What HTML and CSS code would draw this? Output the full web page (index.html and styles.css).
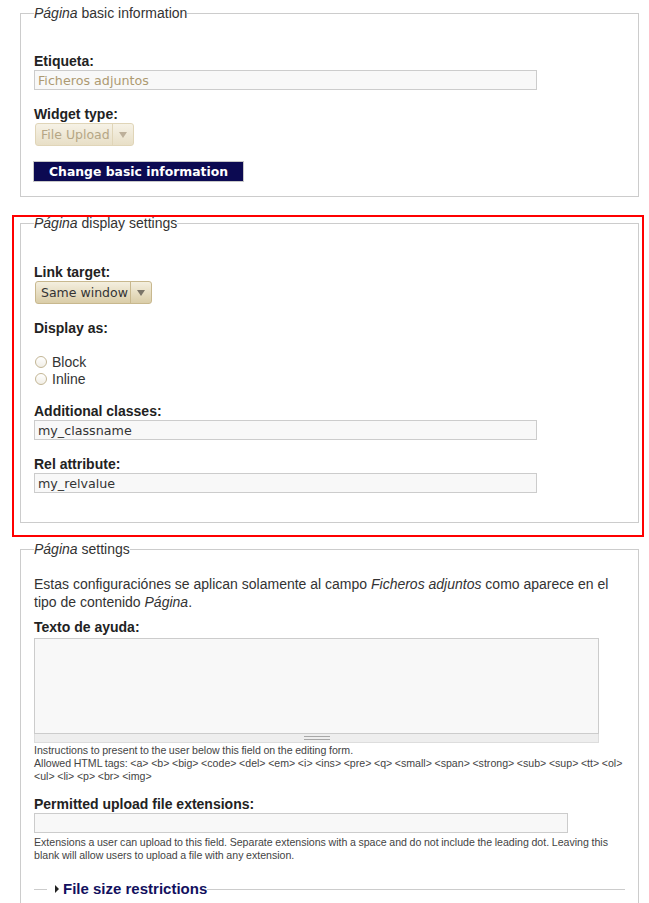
FILE: index.html
```html
<!DOCTYPE html>
<html lang="es">
<head>
<meta charset="utf-8">
<title>Ficheros adjuntos</title>
<link rel="stylesheet" href="styles.css">
</head>
<body>
<div class="page">
  <fieldset class="fs fs-basic">
    <legend><em>Página</em> basic information</legend>
    <div class="item first">
      <label class="lbl">Etiqueta:</label>
      <input class="text w503 is-disabled" type="text" value="Ficheros adjuntos" disabled>
    </div>
    <div class="item">
      <label class="lbl">Widget type:</label>
      <div class="select sel-file is-disabled"><span class="val">File Upload</span><span class="arrow"><span class="tri-down"></span></span></div>
    </div>
    <div class="item btn-row">
      <button class="btn" type="button">Change basic information</button>
    </div>
  </fieldset>

  <div class="highlight">
    <fieldset class="fs fs-display">
      <legend><em>Página</em> display settings</legend>
      <div class="item first">
        <label class="lbl">Link target:</label>
        <div class="select sel-link"><span class="val">Same window</span><span class="arrow"><span class="tri-down"></span></span></div>
      </div>
      <div class="item">
        <label class="lbl">Display as:</label>
        <div class="radios">
          <div class="radio"><span class="circle"></span>Block</div>
          <div class="radio"><span class="circle"></span>Inline</div>
        </div>
      </div>
      <div class="item">
        <label class="lbl">Additional classes:</label>
        <input class="text w503" type="text" value="my_classname">
      </div>
      <div class="item">
        <label class="lbl">Rel attribute:</label>
        <input class="text w503" type="text" value="my_relvalue">
      </div>
    </fieldset>
  </div>

  <fieldset class="fs fs-settings">
    <legend><em>Página</em> settings</legend>
    <p class="intro">Estas configuraciónes se aplican solamente al campo <em>Ficheros adjuntos</em> como aparece en el tipo de contenido <em>Página</em>.</p>
    <div class="item help">
      <label class="lbl">Texto de ayuda:</label>
      <div class="textarea-wrap">
        <div class="textarea"></div>
        <div class="grippie"></div>
      </div>
      <div class="desc">Instructions to present to the user below this field on the editing form.<br>Allowed HTML tags: &lt;a&gt; &lt;b&gt; &lt;big&gt; &lt;code&gt; &lt;del&gt; &lt;em&gt; &lt;i&gt; &lt;ins&gt; &lt;pre&gt; &lt;q&gt; &lt;small&gt; &lt;span&gt; &lt;strong&gt; &lt;sub&gt; &lt;sup&gt; &lt;tt&gt; &lt;ol&gt; &lt;ul&gt; &lt;li&gt; &lt;p&gt; &lt;br&gt; &lt;img&gt;</div>
    </div>
    <div class="item ext">
      <label class="lbl">Permitted upload file extensions:</label>
      <input class="text w534" type="text" value="">
      <div class="desc desc-ext">Extensions a user can upload to this field. Separate extensions with a space and do not include the leading dot. Leaving this blank will allow users to upload a file with any extension.</div>
    </div>
    <fieldset class="collapsed">
      <legend><span class="tri-right"></span><span class="coll-title">File size restrictions</span></legend>
    </fieldset>
  </fieldset>
</div>
</body>
</html>
```

FILE: styles.css
```css
html, body {
  margin: 0;
  padding: 0;
  background: #fff;
}

.page {
  box-sizing: border-box;
  height: 903px;
  overflow: hidden;
  padding: 6px 5px 0 12px;
  font-family: "Liberation Sans", Arial, sans-serif;
  font-size: 14px;
  color: #333;
}

.fs {
  margin: 0 5px 0 8px;
  padding: 0 13px;
  border: 1px solid #ccc;
  min-width: 0;
}

.fs > legend {
  padding: 0;
  font-size: 14px;
  line-height: 14px;
  color: #333;
}

.fs-basic {
  margin-bottom: 18px;
  padding-bottom: 14px;
}

.highlight {
  border: 2px solid #f00;
  padding: 0 3px 12px 6px;
}

.fs-display {
  margin: -1px 0 0;
  padding-bottom: 29px;
}

.fs-display .item.first {
  margin-top: 34px;
}

.fs-settings {
  margin-top: 5px;
  padding-bottom: 40px;
}

.item {
  margin-top: 16px;
}

.item.first {
  margin-top: 33px;
}

.btn-row {
  margin-top: 15px;
}

.lbl {
  display: block;
  font-weight: 700;
  font-size: 14px;
  line-height: 17px;
  color: #222;
}

.text {
  display: block;
  box-sizing: border-box;
  height: 20px;
  margin: 0;
  padding: 0 3px;
  border: 1px solid #ccc;
  border-radius: 0;
  background: #f8f8f8;
  font-family: "DejaVu Sans", sans-serif;
  font-size: 12.7px;
  color: #333;
  outline: none;
}

.text.is-disabled {
  color: #ad9a72;
  -webkit-text-fill-color: #ad9a72;
  opacity: 1;
}

.w503 { width: 503px; }
.w534 { width: 534px; }

.select {
  display: flex;
  box-sizing: border-box;
  height: 23px;
  margin-left: 1px;
  border: 1px solid #c8b88e;
  border-radius: 3px;
  background: linear-gradient(#f4efdf, #dacda8);
  font-family: "DejaVu Sans", sans-serif;
  font-size: 12.5px;
  color: #333;
}

.sel-link { width: 117px; }
.sel-file { width: 99px; }

.select .val {
  flex: 1;
  padding-left: 5px;
  line-height: 21px;
  white-space: nowrap;
  overflow: hidden;
}

.select .arrow {
  display: flex;
  align-items: center;
  justify-content: center;
  width: 20px;
  border-left: 1px solid #c8b88e;
}

.tri-down {
  width: 0;
  height: 0;
  border-left: 4px solid transparent;
  border-right: 4px solid transparent;
  border-top: 6px solid #7a7468;
  margin-top: 1px;
}

.select.is-disabled {
  border-color: #e0d5b8;
  background: linear-gradient(#f6f2e6, #e8dfc7);
  color: #b5a685;
}

.select.is-disabled .arrow {
  border-left-color: #e0d5b8;
}

.select.is-disabled .tri-down {
  border-top-color: #bdb09a;
}

.btn {
  display: block;
  box-sizing: border-box;
  height: 21px;
  margin: 0 0 0 -1px;
  padding: 0 15px;
  border: 1px solid #c8c8c8;
  border-radius: 0;
  background: #0c0a52;
  color: #fff;
  font-family: "DejaVu Sans", sans-serif;
  font-weight: 700;
  font-size: 12.4px;
  line-height: 19px;
  cursor: pointer;
}

.radios {
  margin-top: 16px;
}

.radio {
  display: flex;
  align-items: center;
  height: 17px;
  font-size: 14px;
  color: #333;
}

.circle {
  box-sizing: border-box;
  width: 12px;
  height: 12px;
  margin: 0 5px 0 1px;
  border: 1px solid #c3b695;
  border-radius: 50%;
  background: linear-gradient(#fff, #f1eee6);
}

.intro {
  margin: 19px 0 0;
  font-size: 14px;
  line-height: 18px;
  color: #333;
}

.item.help {
  margin-top: 8px;
}

.textarea-wrap {
  width: 565px;
  margin-top: 2px;
}

.textarea {
  box-sizing: border-box;
  height: 96px;
  border: 1px solid #ccc;
  background: #f8f8f8;
}

.grippie {
  box-sizing: border-box;
  height: 9px;
  border: 1px solid #ddd;
  border-top: 0;
  background: #eee;
  display: flex;
  justify-content: center;
  align-items: center;
}

.grippie::before {
  content: "";
  box-sizing: border-box;
  width: 26px;
  height: 4px;
  border-top: 1px solid #a8a8a8;
  border-bottom: 1px solid #a8a8a8;
}

.desc {
  margin-top: 1px;
  font-size: 10.6px;
  line-height: 13px;
  word-spacing: -0.35px;
  color: #444;
}

.item.ext {
  margin-top: 13px;
}

.desc-ext {
  margin-top: 3px;
}

.collapsed {
  margin: 18px 0 0;
  padding: 0 13px;
  border: 0;
  border-top: 1px solid #ccc;
  min-width: 0;
}

.collapsed > legend {
  padding: 0;
  line-height: 17px;
}

.tri-right {
  display: inline-block;
  width: 0;
  height: 0;
  margin: 0 4px 0 8px;
  border-left: 4px solid #222;
  border-top: 4px solid transparent;
  border-bottom: 4px solid transparent;
  vertical-align: 1px;
}

.coll-title {
  font-weight: 700;
  font-size: 15px;
  color: #12105e;
}
```
